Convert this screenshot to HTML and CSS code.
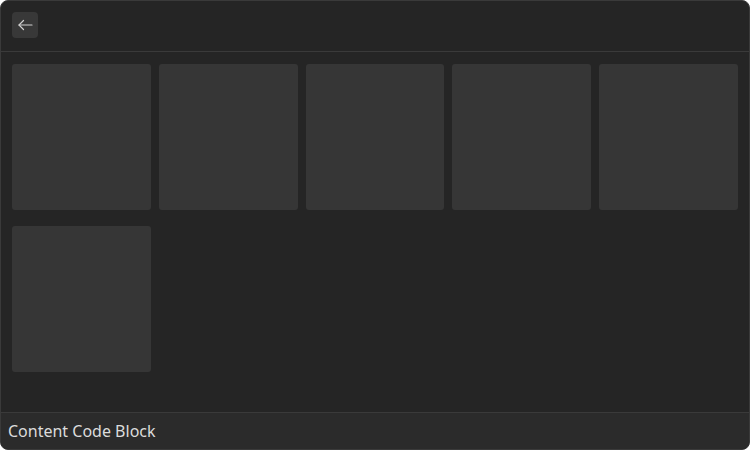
FILE: index.html
```html
<!DOCTYPE html>
<html lang="en">
<head>
    <meta charset="UTF-8">
    <meta name="viewport" content="width=device-width, initial-scale=1.0">
    <title>Content Code Block</title>
    <link rel="stylesheet" href="styles.css">
</head>
<body>
    <div class="window">
        <div class="header">
            <button class="back" aria-label="Back">
                <svg width="16" height="16" viewBox="0 0 16 16" fill="none" stroke="#d0d0d0" stroke-width="1.2" stroke-linecap="round" stroke-linejoin="round">
                    <path d="M2 8H15"/>
                    <path d="M6.5 3.5L2 8L6.5 12.5"/>
                </svg>
            </button>
        </div>
        <div class="content">
            <div class="grid">
                <div class="card"></div>
                <div class="card"></div>
                <div class="card"></div>
                <div class="card"></div>
                <div class="card"></div>
                <div class="card"></div>
            </div>
        </div>
        <div class="footer">Content Code Block</div>
    </div>
</body>
</html>
```

FILE: styles.css
```css
body {
    margin: 0;
    background-color: #fff;
    font-family: "Noto Sans", "Open Sans", sans-serif;
}

.window {
    box-sizing: border-box;
    width: 750px;
    height: 450px;
    display: flex;
    flex-direction: column;
    background-color: #252525;
    border: 1px solid #3a3a3a;
    border-radius: 8px;
    overflow: hidden;
}

.header {
    height: 51px;
    padding: 11px 11px 0;
    box-sizing: border-box;
    border-bottom: 1px solid #3a3a3a;
    flex-shrink: 0;
}

.back {
    width: 26px;
    height: 26px;
    padding: 0;
    border: none;
    border-radius: 4px;
    background-color: #383838;
    display: flex;
    align-items: center;
    justify-content: center;
    cursor: pointer;
}

.content {
    flex: 1;
    padding: 12px 11px;
}

.grid {
    display: grid;
    grid-template-columns: repeat(5, 1fr);
    column-gap: 8px;
    row-gap: 16px;
}

.card {
    height: 146px;
    background-color: #363636;
    border-radius: 3px;
}

.footer {
    height: 37px;
    box-sizing: border-box;
    border-top: 1px solid #3a3a3a;
    background-color: #2b2b2b;
    color: #dcdcdc;
    font-size: 16px;
    line-height: 36px;
    padding-left: 7px;
    flex-shrink: 0;
}
```
